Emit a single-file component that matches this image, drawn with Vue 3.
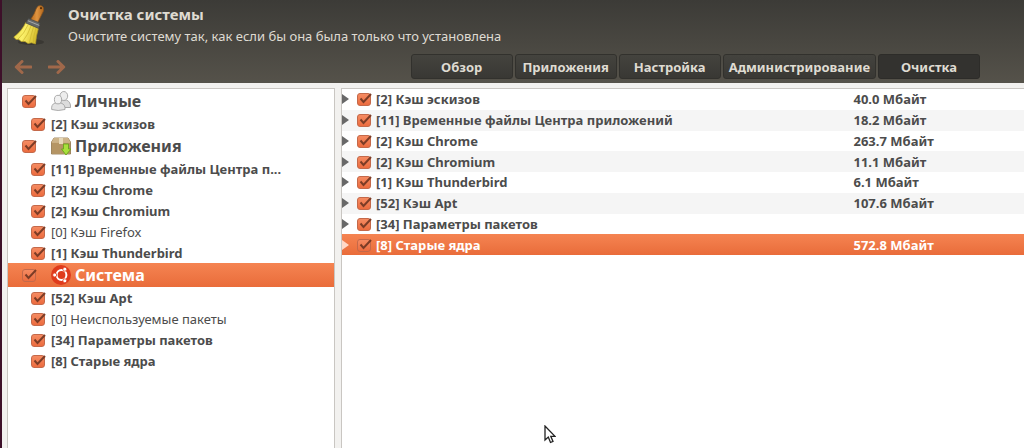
<script setup>
import { reactive, ref } from 'vue'

const tabs = ['Обзор', 'Приложения', 'Настройка', 'Администрирование', 'Очистка']
const activeTab = ref('Очистка')
const selectedGroup = ref('system')
const selectedRow = ref(7)

const groups = reactive([
  {
    id: 'personal', title: 'Личные', on: true,
    items: [{ text: '[2] Кэш эскизов', on: true }]
  },
  {
    id: 'apps', title: 'Приложения', on: true,
    items: [
      { text: '[11] Временные файлы Центра п...', on: true },
      { text: '[2] Кэш Chrome', on: true },
      { text: '[2] Кэш Chromium', on: true },
      { text: '[0] Кэш Firefox', on: true, empty: true },
      { text: '[1] Кэш Thunderbird', on: true }
    ]
  },
  {
    id: 'system', title: 'Система', on: true,
    items: [
      { text: '[52] Кэш Apt', on: true },
      { text: '[0] Неиспользуемые пакеты', on: true, empty: true },
      { text: '[34] Параметры пакетов', on: true },
      { text: '[8] Старые ядра', on: true }
    ]
  }
])

const rows = reactive([
  { text: '[2] Кэш эскизов', size: '40.0 Мбайт', on: true },
  { text: '[11] Временные файлы Центра приложений', size: '18.2 Мбайт', on: true },
  { text: '[2] Кэш Chrome', size: '263.7 Мбайт', on: true },
  { text: '[2] Кэш Chromium', size: '11.1 Мбайт', on: true },
  { text: '[1] Кэш Thunderbird', size: '6.1 Мбайт', on: true },
  { text: '[52] Кэш Apt', size: '107.6 Мбайт', on: true },
  { text: '[34] Параметры пакетов', size: '', on: true },
  { text: '[8] Старые ядра', size: '572.8 Мбайт', on: true }
])
</script>

<template>
  <div class="window">
    <header class="header">
      <div class="banner">
        <svg class="broom" viewBox="0 0 34 42" aria-hidden="true">
          <defs>
            <linearGradient id="handle" x1="0" x2="1">
              <stop offset="0" stop-color="#b8681a" />
              <stop offset="0.5" stop-color="#e09440" />
              <stop offset="1" stop-color="#b0661c" />
            </linearGradient>
            <linearGradient id="straw" x1="0" x2="1" y2="0.3">
              <stop offset="0" stop-color="#e6d640" />
              <stop offset="0.5" stop-color="#fbf06a" />
              <stop offset="1" stop-color="#d8c030" />
            </linearGradient>
          </defs>
          <ellipse cx="18" cy="38" rx="13" ry="3" fill="#2b2a26" opacity="0.5" />
          <path d="M17 16.500 21 10 23.500 4Q25.500 .8 28.500 1.800 31.500 3.200 30.500 7L27.500 13 24 20Z" fill="url(#handle)" stroke="#85501a" stroke-width="0.700" />
          <circle cx="28" cy="4.200" r="1.100" fill="#5a3008" />
          <path d="M13 18Q9 27 .8 33L3 35.500 6 35.500 8 37.500 12 37.500 15 39.500 18.500 38.800 22.500 40Q23 32 25.500 24Z" fill="url(#straw)" stroke="#b39c24" stroke-width="0.700" />
          <path d="M15 21Q11 30 5 35M18 22Q15 31 10 37M20.500 23Q18 31 16.500 38.500M23 24Q20 33 20.500 39" fill="none" stroke="#cbb52c" stroke-width="0.700" />
          <path d="M15.500 14.500 27 19 25.800 24.500 12.800 19Z" fill="#66696a" stroke="#454645" stroke-width="0.700" />
          <path d="M14.800 16.700 26.300 21.400" stroke="#a5a9a8" stroke-width="1" />
        </svg>
        <div>
          <h1>Очистка системы</h1>
          <p>Очистите систему так, как если бы она была только что установлена</p>
        </div>
      </div>
      <div class="toolbar">
        <div class="history">
          <button type="button" aria-label="Назад">
            <svg viewBox="0 0 18 14"><path d="M17 7H3M8 1.500 2.300 7 8 12.500" /></svg>
          </button>
          <button type="button" aria-label="Вперёд">
            <svg viewBox="0 0 18 14"><path d="M1 7H15M10 1.500 15.700 7 10 12.500" /></svg>
          </button>
        </div>
        <nav class="tabs">
          <button
            v-for="tab in tabs" :key="tab" type="button"
            :class="{ active: tab === activeTab }" @click="activeTab = tab"
          >{{ tab }}</button>
        </nav>
      </div>
    </header>

    <main class="panes">
      <aside class="sidebar">
        <section v-for="group in groups" :key="group.id">
          <label class="group" :class="{ selected: group.id === selectedGroup }" @click="selectedGroup = group.id">
            <span class="check">
              <input v-model="group.on" type="checkbox">
              <svg v-if="group.on" viewBox="0 0 15 14"><path d="M3.500 6.500 6.500 10 14 2" /></svg>
            </span>
            <svg v-if="group.id === 'personal'" class="icon" viewBox="0 0 20 20" aria-hidden="true">
              <g fill="#dcdcdc" stroke="#a3a3a3" stroke-width="0.900">
                <path d="M7 16.500Q6 11.500 10 9L15.500 9Q20 11 19.500 16.500Z" />
                <ellipse cx="12.800" cy="5" rx="3.900" ry="4.500" fill="#ededed" />
                <path d="M.7 18.500Q0 13.500 4 12L10 12Q14.500 13.500 14 18.500Q7 20.500.7 18.500Z" fill="#e4e4e4" />
                <ellipse cx="7" cy="8.600" rx="3.600" ry="4.300" fill="#f1f1f1" />
              </g>
            </svg>
            <svg v-else-if="group.id === 'apps'" class="icon" viewBox="0 0 20 20" aria-hidden="true">
              <path d="M3 2H17L19.500 6V18H.5V6Z" fill="#c9ad80" stroke="#8e7248" stroke-width="0.800" />
              <path d="M3 2H17L19.500 6.500H.5Z" fill="#cdb388" />
              <path d="M1 7H19V17.500H1Z" fill="#b59564" />
              <path d="M8 2H12V8H8Z" fill="#e6d8b8" />
              <path d="M12.500 8H17.500V13H20L15 19 10.500 13H12.500Z" fill="#a9e03c" stroke="#6aa61c" stroke-width="0.900" />
            </svg>
            <svg v-else class="icon" viewBox="0 0 20 20" aria-hidden="true">
              <circle cx="10" cy="10" r="10" fill="#df3b1c" />
              <circle cx="10.500" cy="10" r="4.900" fill="none" stroke="#fff" stroke-width="2" />
              <g fill="#fff" stroke="#df3b1c" stroke-width="0.800">
                <circle cx="3.700" cy="10" r="2" />
                <circle cx="13.800" cy="4.200" r="2" />
                <circle cx="13.800" cy="15.800" r="2" />
              </g>
            </svg>
            <span>{{ group.title }}</span>
          </label>
          <label v-for="item in group.items" :key="item.text" class="item" :class="{ empty: item.empty }">
            <span class="check">
              <input v-model="item.on" type="checkbox">
              <svg v-if="item.on" viewBox="0 0 15 14"><path d="M3.500 6.500 6.500 10 14 2" /></svg>
            </span>
            <span>{{ item.text }}</span>
          </label>
        </section>
      </aside>

      <div class="results">
        <table>
          <tbody>
            <tr v-for="(row, i) in rows" :key="row.text" :class="{ selected: i === selectedRow }" @click="selectedRow = i">
              <td>
                <div class="cell">
                  <button type="button" class="expander" aria-label="Развернуть">
                    <svg viewBox="0 0 7 10"><path d="M0 0 7 5 0 10Z" /></svg>
                  </button>
                  <label>
                    <span class="check">
                      <input v-model="row.on" type="checkbox">
                      <svg v-if="row.on" viewBox="0 0 15 14"><path d="M3.500 6.500 6.500 10 14 2" /></svg>
                    </span>
                    <span>{{ row.text }}</span>
                  </label>
                </div>
              </td>
              <td class="size">{{ row.size }}</td>
            </tr>
          </tbody>
        </table>
      </div>
    </main>

    <svg class="pointer" viewBox="0 0 12 19" aria-hidden="true">
      <path d="M1 1V15L4.300 12 6.500 17.500 9 16.400 6.800 11.300H11Z" fill="#fff" stroke="#222" stroke-width="1.300" />
    </svg>
  </div>
</template>

<style>
body {
  margin: 0;
}
</style>

<style scoped>
.window {
  position: relative;
  box-sizing: border-box;
  display: flex;
  flex-direction: column;
  min-height: 100vh;
  border-left: 2px solid #3d1029;
  background: #f2f1ef;
  color: #4c4c4c;
  font: 13px/20px "Noto Sans", "Open Sans", sans-serif;
}
button {
  margin: 0;
  padding: 0;
  border: 0;
  background: none;
  font: inherit;
  color: inherit;
}
svg {
  display: block;
}
.header {
  display: flex;
  flex-direction: column;
  justify-content: space-between;
  box-sizing: border-box;
  height: 83px;
  padding: 4px 44px 4px 11px;
  background: linear-gradient(#3c3b37, #55524a);
  color: #dfdbd2;
}
.banner {
  display: flex;
  gap: 21px;
}
.broom {
  width: 34px;
  height: 42px;
}
h1 {
  margin: 0;
  font-size: 15px;
  line-height: 20px;
}
p {
  margin: 2px 0 0;
  line-height: 20px;
}
.toolbar {
  display: flex;
  justify-content: space-between;
  align-items: center;
}
.history {
  display: flex;
  gap: 16px;
  padding-left: 1px;
}
.history svg {
  width: 18px;
  height: 14px;
  fill: none;
  stroke: #a0684a;
  stroke-width: 3px;
  stroke-linecap: round;
  stroke-linejoin: round;
}
.tabs {
  display: flex;
  gap: 2px;
}
.tabs button {
  box-sizing: border-box;
  min-width: 102px;
  height: 25px;
  padding: 0 5px;
  border: 1px solid #32312d;
  border-radius: 3px;
  background: linear-gradient(#44433e, #393834);
  font-weight: bold;
}
.tabs .active {
  background: #33322f;
  border-color: #2d2c29;
}
.panes {
  flex: 1;
  display: flex;
  gap: 6px;
  padding: 5px 0 0 5px;
}
.sidebar {
  flex: 0 0 326px;
  border: 1px solid #c9c6c2;
  border-bottom: 0;
  background: #fff;
  font-weight: bold;
}
.group,
.item {
  display: flex;
  align-items: center;
}
.group {
  height: 24px;
  padding-left: 14px;
  font-size: 16px;
}
.item {
  height: 21px;
  padding-left: 23px;
  gap: 5px;
}
.empty {
  font-weight: normal;
}
.icon {
  width: 20px;
  height: 20px;
  margin: 0 4px 0 14px;
}
.check {
  display: grid;
  flex: none;
}
.check input,
.check svg {
  grid-area: 1 / 1;
}
.check input {
  appearance: none;
  box-sizing: border-box;
  width: 14px;
  height: 13px;
  margin: 1px 1px 0 0;
  border: 1px solid #c4694a;
  border-radius: 3px;
  background: linear-gradient(#f58b62, #ec6c3f);
}
.check svg {
  width: 15px;
  height: 14px;
  pointer-events: none;
  fill: none;
  stroke: #7c3c26;
  stroke-width: 2px;
}
.selected {
  background: linear-gradient(#f58452, #e96c3a);
  color: #fff;
}
.results {
  flex: 1;
  min-width: 0;
  border: 1px solid #c9c6c2;
  border-width: 1px 0 0 1px;
  background: #fff;
}
table {
  width: 100%;
  height: 166px;
  table-layout: fixed;
  border-collapse: collapse;
  font-weight: bold;
}
td {
  padding: 0;
}
tr:nth-child(even):not(.selected) {
  background: #f5f5f5;
}
.size {
  width: 25%;
}
.cell,
.cell label {
  display: flex;
  align-items: center;
}
.cell {
  gap: 8px;
  white-space: nowrap;
}
.cell label {
  gap: 4px;
}
.expander svg {
  width: 7px;
  height: 10px;
  fill: #686868;
}
.selected .expander svg {
  fill: #ffd9c8;
}
.pointer {
  position: absolute;
  left: 542px;
  top: 425px;
  width: 12px;
  height: 19px;
}
</style>
